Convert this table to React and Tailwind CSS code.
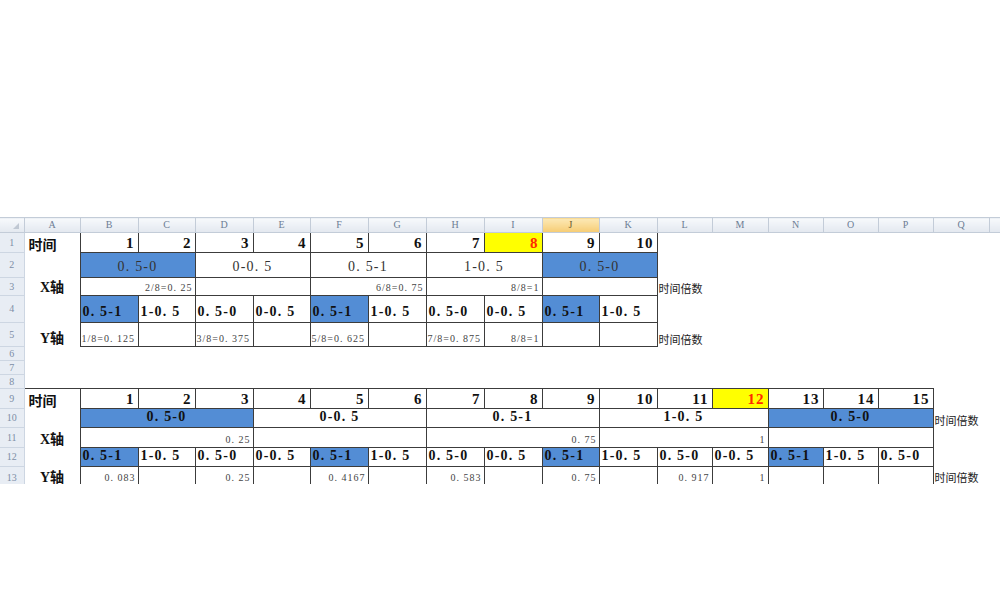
import React from "react";

const SERIF = "font-['Liberation_Serif','Noto_Sans_CJK_SC',serif]";
const CJK = "font-['Noto_Sans_CJK_SC',sans-serif]";
const BOX = "border border-[#3c3c3c]";
const BLUE = "bg-[#538dd5]";
const YEL = "bg-[#ffff00]";

const widths = [
  "w-[24px]", "w-[56px]",
  "w-[58px]", "w-[57px]", "w-[58px]", "w-[57px]", "w-[58px]", "w-[58px]", "w-[58px]", "w-[58px]", "w-[57px]", "w-[58px]",
  "w-[55px]", "w-[56px]", "w-[55px]", "w-[55px]", "w-[55px]", "w-[56px]",
  "w-[11px]",
];

const letters = ["A", "B", "C", "D", "E", "F", "G", "H", "I", "J", "K", "L", "M", "N", "O", "P", "Q", ""];

function Rn({ n, top }) {
  return (
    <td className={`p-0 bg-[#e8edf4] border-r border-b border-[#cdd6e2] text-center text-[10px] leading-none text-[#7d8ea6] ${SERIF} ${top ? "align-top pt-[6px]" : "align-middle"}`}>
      {n}
    </td>
  );
}

function E({ span = 1, cls = "" }) {
  return <td colSpan={span} className={`p-0 ${cls}`}></td>;
}

function Num({ v, hl }) {
  return (
    <td className={`p-0 pr-[3px] pb-[1px] ${BOX} ${hl ? YEL + " text-[#ff2a00]" : "text-[#111]"} text-right align-bottom font-bold text-[15px] leading-[16px] tracking-[1px] ${SERIF}`}>
      {v}
    </td>
  );
}

function Label({ v, blue }) {
  return (
    <td className={`p-0 pl-[2px] pb-[3px] ${BOX} ${blue ? BLUE : ""} text-left align-bottom whitespace-nowrap font-bold text-[14px] leading-[14px] tracking-[1.2px] text-[#111] ${SERIF}`}>
      {v}
    </td>
  );
}

function Merge({ v, span, blue, bold }) {
  return (
    <td colSpan={span} className={`p-0 pb-[3px] ${BOX} ${blue ? BLUE : ""} text-center align-bottom whitespace-nowrap text-[14px] leading-[14px] tracking-[1.2px] ${bold ? "font-bold text-[#111]" : "font-normal text-[#333]"} ${SERIF}`}>
      {v}
    </td>
  );
}

function Small({ v, span = 1, align = "right", top }) {
  return (
    <td colSpan={span} className={`p-0 pr-[2px] ${BOX} ${align === "right" ? "text-right" : "text-left pl-[1px]"} ${top ? "align-top pt-[6px]" : "align-bottom pb-[2px]"} whitespace-nowrap text-[10px] leading-[10px] tracking-[1px] text-[#444] ${SERIF}`}>
      {v}
    </td>
  );
}

function Axis({ v, top }) {
  return (
    <td className={`p-0 text-center whitespace-nowrap font-bold text-[14px] leading-[15px] text-[#111] ${SERIF} ${top ? "align-top pt-[3px]" : "align-bottom pb-[1px]"}`}>
      {v}
    </td>
  );
}

function Note({ top }) {
  return (
    <td className={`p-0 pl-[1px] whitespace-nowrap text-[11px] leading-[13px] text-[#222] ${CJK} ${top ? "align-top pt-[4px]" : "align-bottom pb-[1px]"}`}>
      时间倍数
    </td>
  );
}

const seq = ["0. 5-1", "1-0. 5", "0. 5-0", "0-0. 5"];

export default function App() {
  return (
    <div className="w-[1000px] h-[600px] bg-white overflow-hidden">
      <div className="h-[217px]"></div>
      <div className="h-[267px] overflow-hidden">
        <table className="table-fixed border-collapse w-[1000px]">
          <colgroup>
            {widths.map((w, i) => (
              <col key={i} className={w} />
            ))}
          </colgroup>
          <tbody>
            {/* header */}
            <tr className="h-[15px]">
              <td className="p-0 bg-linear-to-b from-[#f7f9fc] to-[#e3e8ef] border-t border-b border-r border-[#c3ccd8] relative">
                <svg className="absolute right-[5px] bottom-[3px]" width="6" height="6" viewBox="0 0 6 6">
                  <polygon points="6,0 6,6 0,6" fill="#c0c8d3" />
                </svg>
              </td>
              {letters.map((l, i) => (
                <td
                  key={i}
                  className={`p-0 border-t border-b border-r border-[#c3ccd8] text-center align-middle text-[10px] leading-none ${SERIF} ${
                    l === "J"
                      ? "bg-linear-to-b from-[#fce9b6] to-[#f6cc72] text-[#6b5a30]"
                      : "bg-linear-to-b from-[#f7f9fc] to-[#e3e8ef] text-[#6c7d94]"
                  }`}
                >
                  {l}
                </td>
              ))}
            </tr>

            {/* row 1 */}
            <tr className="h-[20px]">
              <Rn n="1" />
              <td className={`p-0 pl-[4px] pb-[1px] text-left align-bottom font-bold text-[14px] leading-[16px] text-[#111] ${CJK}`}>时间</td>
              {[1, 2, 3, 4, 5, 6, 7, 8, 9, 10].map((n) => (
                <Num key={n} v={n} hl={n === 8} />
              ))}
              <E span={7} />
            </tr>

            {/* row 2 */}
            <tr className="h-[25px]">
              <Rn n="2" />
              <E />
              <Merge v="0. 5-0" span={2} blue />
              <Merge v="0-0. 5" span={2} />
              <Merge v="0. 5-1" span={2} />
              <Merge v="1-0. 5" span={2} />
              <Merge v="0. 5-0" span={2} blue />
              <E span={7} />
            </tr>

            {/* row 3 */}
            <tr className="h-[18px]">
              <Rn n="3" />
              <Axis v="X轴" />
              <Small v="2/8=0. 25" span={2} />
              <Small v="" span={2} />
              <Small v="6/8=0. 75" span={2} />
              <Small v="8/8=1" span={2} />
              <Small v="" span={2} />
              <Note />
              <E span={6} />
            </tr>

            {/* row 4 */}
            <tr className="h-[27px]">
              <Rn n="4" />
              <E />
              {[0, 1, 2, 3, 4, 5, 6, 7, 8, 9].map((i) => (
                <Label key={i} v={seq[i % 4]} blue={i % 4 === 0} />
              ))}
              <E span={7} />
            </tr>

            {/* row 5 */}
            <tr className="h-[24px]">
              <Rn n="5" />
              <Axis v="Y轴" />
              <Small v="1/8=0. 125" align="left" />
              <Small v="" />
              <Small v="3/8=0. 375" align="left" />
              <Small v="" />
              <Small v="5/8=0. 625" align="left" />
              <Small v="" />
              <Small v="7/8=0. 875" align="left" />
              <Small v="8/8=1" />
              <Small v="" />
              <Small v="" />
              <Note />
              <E span={6} />
            </tr>

            {[6, 7, 8].map((n) => (
              <tr key={n} className="h-[14px]">
                <Rn n={n} />
                <E span={18} />
              </tr>
            ))}

            {/* row 9 */}
            <tr className="h-[20px]">
              <Rn n="9" />
              <td className={`p-0 pl-[4px] pb-[1px] text-left align-bottom font-bold text-[14px] leading-[16px] text-[#111] border-t border-[#3c3c3c] ${CJK}`}>时间</td>
              {[1, 2, 3, 4, 5, 6, 7, 8, 9, 10, 11, 12, 13, 14, 15].map((n) => (
                <Num key={n} v={n} hl={n === 12} />
              ))}
              <E span={2} />
            </tr>

            {/* row 10 */}
            <tr className="h-[19px]">
              <Rn n="10" />
              <E />
              <Merge v="0. 5-0" span={3} blue bold />
              <Merge v="0-0. 5" span={3} bold />
              <Merge v="0. 5-1" span={3} bold />
              <Merge v="1-0. 5" span={3} bold />
              <Merge v="0. 5-0" span={3} blue bold />
              <Note />
              <E />
            </tr>

            {/* row 11 */}
            <tr className="h-[20px]">
              <Rn n="11" />
              <Axis v="X轴" />
              <Small v="0. 25" span={3} />
              <Small v="" span={3} />
              <Small v="0. 75" span={3} />
              <Small v="1" span={3} />
              <Small v="" span={3} />
              <E span={2} />
            </tr>

            {/* row 12 */}
            <tr className="h-[19px]">
              <Rn n="12" />
              <E />
              {[0, 1, 2, 3, 4, 5, 6, 7, 8, 9, 10, 11, 12, 13, 14].map((i) => (
                <Label key={i} v={seq[i % 4]} blue={i % 4 === 0} />
              ))}
              <E span={2} />
            </tr>

            {/* row 13 (cut off at the bottom edge) */}
            <tr className="h-[22px]">
              <Rn n="13" top />
              <Axis v="Y轴" top />
              <Small v="0. 083" top />
              <Small v="" top />
              <Small v="0. 25" top />
              <Small v="" top />
              <Small v="0. 4167" top />
              <Small v="" top />
              <Small v="0. 583" top />
              <Small v="" top />
              <Small v="0. 75" top />
              <Small v="" top />
              <Small v="0. 917" top />
              <Small v="1" top />
              <Small v="" top />
              <Small v="" top />
              <Small v="" top />
              <Note top />
              <E />
            </tr>
          </tbody>
        </table>
      </div>
    </div>
  );
}
